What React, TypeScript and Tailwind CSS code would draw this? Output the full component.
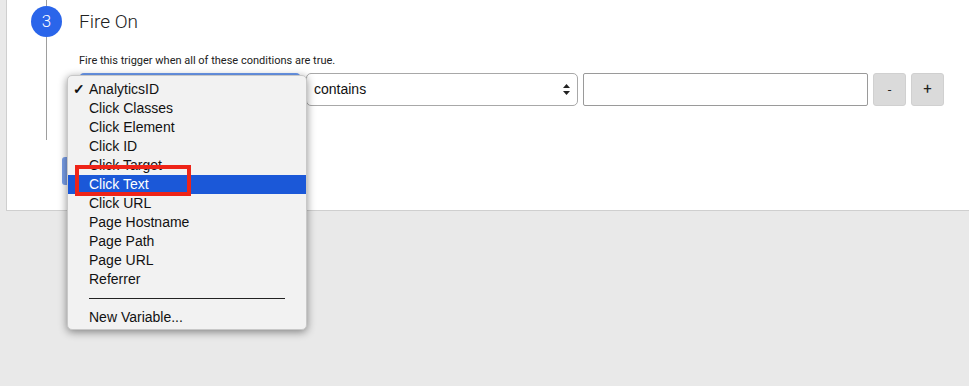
import React from 'react';

const variables = [
  'AnalyticsID',
  'Click Classes',
  'Click Element',
  'Click ID',
  'Click Target',
  'Click Text',
  'Click URL',
  'Page Hostname',
  'Page Path',
  'Page URL',
  'Referrer',
];

const SortArrows = () => (
  <svg width="7" height="11" viewBox="0 0 7 11" className="text-[#222]">
    <path d="M3.5 0 L7 4 L0 4 Z" fill="currentColor" />
    <path d="M3.5 11 L7 7 L0 7 Z" fill="currentColor" />
  </svg>
);

const VariableMenu = () => (
  <div className="absolute left-[60px] top-[75px] w-[240px] h-[255px] bg-[#f2f2f2] rounded-[5px] shadow-[0_2px_8px_rgba(0,0,0,0.45)] border border-[#c8c8c8] pt-[4px] font-['Liberation_Sans',Arial,sans-serif] text-[14px] text-[#111] z-10">
    {variables.map((name) => {
      const selected = name === 'Click Text';
      return (
        <div
          key={name}
          className={`relative h-[19px] leading-[19px] pl-[21px] ${selected ? 'bg-[#1b58d8] text-white' : ''}`}
        >
          {name === 'AnalyticsID' && <span className="absolute left-[5px] top-0 font-bold">✓</span>}
          {name}
          {selected && (
            <div className="absolute left-[7px] top-[-10px] w-[116px] h-[31px] border-[4px] border-[#ee2418]" />
          )}
        </div>
      );
    })}
    <div className="mx-[21px] my-[9px] border-t border-[#222]" />
    <div className="h-[19px] leading-[19px] pl-[21px]">New Variable...</div>
  </div>
);

export default function App() {
  return (
    <div className="w-[969px] h-[386px] bg-[#e9e9e9] overflow-hidden font-['Roboto',sans-serif]">
      <div className="relative ml-[6px] h-[211px] bg-white border-l border-b border-[#cfcfcf] flex">
        {/* step timeline */}
        <div className="w-[72px] pl-[24px]">
          <div className="w-[31px] flex flex-col items-center">
            <div className="w-px h-[6px] bg-[#9e9e9e]" />
            <div className="w-[31px] h-[31px] rounded-full bg-[#2a65ea] text-white text-[17px] font-light flex items-center justify-center">
              3
            </div>
            <div className="w-px h-[103px] bg-[#9e9e9e]" />
          </div>
        </div>

        <div className="flex-1 pt-[10px]">
          <div className="text-[19px] font-light text-[#212121] leading-[24px]">Fire On</div>
          <div className="mt-[20px] text-[11px] text-[#212121] leading-[14px]">
            Fire this trigger when all of these conditions are true.
          </div>
          <div className="mt-[5px] flex items-center gap-[5px]">
            <div className="w-[222px] h-[33px] rounded-[5px] border-2 border-[#6d9cf2] bg-white" />
            <div className="w-[272px] h-[33px] rounded-[5px] border border-[#a8a8a8] bg-white flex items-center justify-between px-[7px] text-[14px] text-[#111] font-['Liberation_Sans',Arial,sans-serif]">
              <span>contains</span>
              <SortArrows />
            </div>
            <div className="w-[285px] h-[33px] rounded-[2px] border border-[#9a9a9a] bg-white" />
            <button className="w-[33px] h-[33px] rounded-[3px] bg-[#dadada] border border-[#d0d0d0] text-[13px] text-[#222] flex items-center justify-center">
              -
            </button>
            <button className="w-[33px] h-[33px] rounded-[3px] bg-[#dadada] border border-[#d0d0d0] text-[15px] text-[#222] flex items-center justify-center">
              +
            </button>
          </div>
          <div className="mt-[51px] -ml-[17px] w-[70px] h-[28px] rounded-[3px] bg-[#7a9fe8]" />
        </div>

        <VariableMenu />
      </div>
    </div>
  );
}
